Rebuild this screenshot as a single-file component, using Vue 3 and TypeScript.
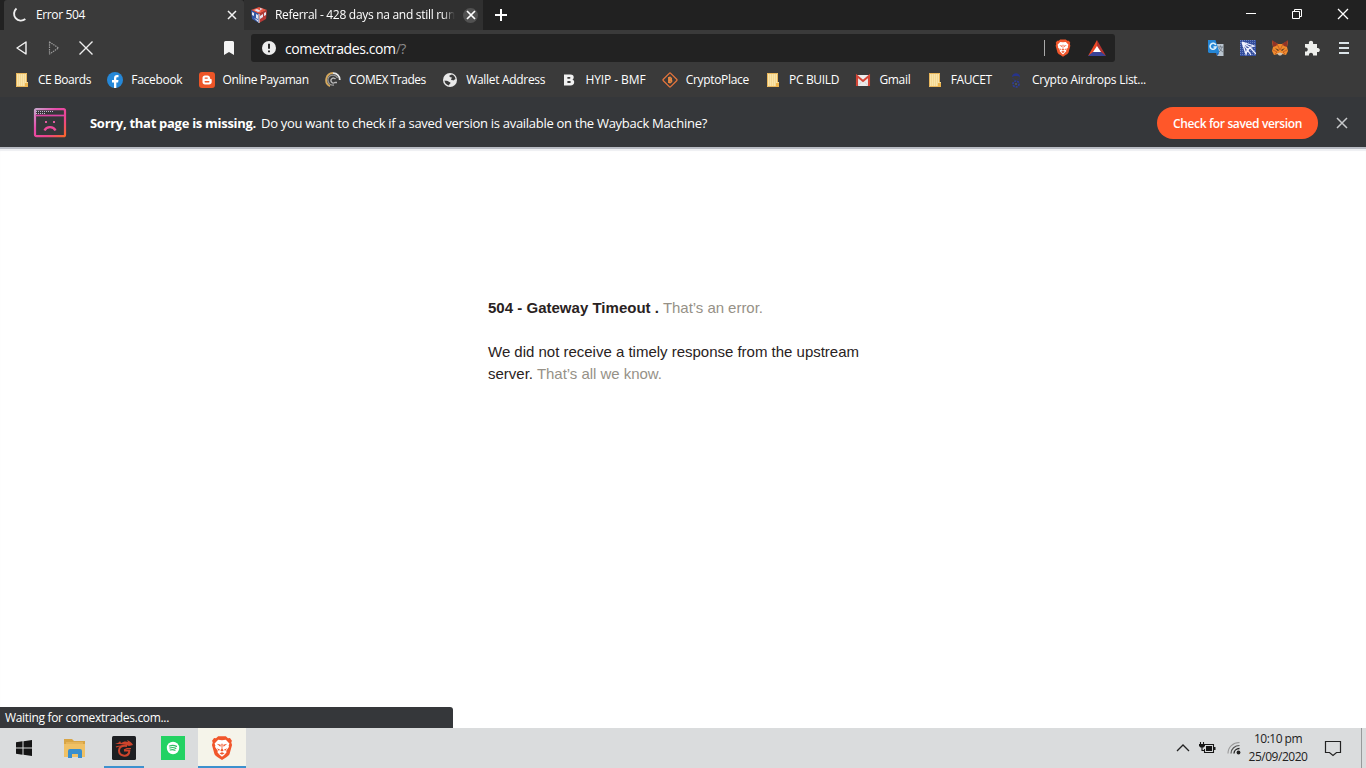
<script setup lang="ts">
interface Glyph {
  name: string;
  body: string;
}

interface Bookmark {
  label: string;
  width: number;
  icon: string;
}

const folder =
  '<path d="M2 1h11v9h1v5H2z" fill="#f4d892"/><path d="M3 3h9M3 5h9M3 7h9M3 9h9M3 11h9M3 13h8" stroke="#fff0c4" stroke-width="1" stroke-dasharray="1 1"/><path d="M2.500 1v13.500H12M2 1.500h10.500V10" fill="none" stroke="#e9b65b" stroke-width="1"/><path d="M11 11h3v4h-3z" fill="#edb44e"/>';

const bookmarks: Bookmark[] = [
  { label: 'CE Boards', width: 53, icon: folder },
  {
    label: 'Facebook',
    width: 51,
    icon: '<circle cx="8" cy="8" r="8" fill="#2588d8"/><path d="M7 16v-5.500H5V8h2V6.200C7 4 8.300 3 10 3h1.500v2.200h-1c-1 0-1.200.5-1.200 1.300V8h2.200l-.4 2.500H9.300V16z" fill="#fff"/>',
  },
  {
    label: 'Online Payaman',
    width: 86,
    icon: '<rect width="16" height="16" rx="3" fill="#ed5527"/><path d="M3.500 6c0-1.500 1-2.500 2.500-2.500h2.500c1.500 0 2.500 1 2.500 2.300 0 1 .3 1.200 1 1.200.5 0 .7.300.7.700V10c0 1.500-1 2.500-2.600 2.500H6c-1.500 0-2.500-1-2.500-2.500z" fill="#fff"/><path d="M6.200 6.100h2M6.200 9.700h3.600" stroke="#ed5527" stroke-width="1.400" stroke-linecap="round"/>',
  },
  {
    label: 'COMEX Trades',
    width: 77,
    icon: '<g fill="none"><path d="M5 14.200A7 7 0 0 1 8 1" stroke="#d5a85c" stroke-width="1.900"/><path d="M8 1.200a6.500 6.500 0 0 1 6.800 6.800" stroke="#e8e8e8" stroke-width="1.800"/><path d="M12.500 6A5 5 0 1 0 9 13" stroke="#999" stroke-width="1.300"/><path d="M10.500 7a2.500 2.500 0 1 0-.5 3.500h2" stroke="#b8b8b8" stroke-width="1.300"/></g>',
  },
  {
    label: 'Wallet Address',
    width: 79,
    icon: '<circle cx="8" cy="8" r="7" fill="#e9e9e9"/><path d="M2.500 8.500c1.500.5 3 0 4 1s2 .5 2 1.500-1.500 1-1.500 2.500C4.500 13 2.500 11 2.500 8.500zM7 4c1-1 2-1.500 3-1.500 2 .7 3.300 2.500 3.500 4.500-1 1-1.500.5-2 1.500-1-.5-2 0-2.500-1 0-1 1-1 1-2-1 .3-2-.5-3-1.500z" fill="#3b3b3b"/>',
  },
  {
    label: 'HYIP - BMF',
    width: 60,
    icon: '<path fill-rule="evenodd" d="M3 2.500h6.500c2.200 0 3.200 1 3.200 2.700 0 1.200-.5 1.900-1.500 2.300 1.300.3 2 1.200 2 2.600 0 2.200-1.300 3.400-3.700 3.400H3zM6.400 5v1.800h2.100c1.300 0 1.300-1.800 0-1.800zm0 3.900v2.100h2.300c1.500 0 1.500-2.100 0-2.100z" fill="#f1f1f1"/>',
  },
  {
    label: 'CryptoPlace',
    width: 63,
    icon: '<rect x="2.800" y="2.800" width="10.400" height="10.400" rx="1" transform="rotate(45 8 8)" fill="none" stroke="#e4743c" stroke-width="1.300"/><path d="M6.700 5.500v5h1.500c2.100 0 2.100-2.500.3-2.500 1.400 0 1.400-2.500-.3-2.500zM6.700 8h2M8 4.500v7" fill="none" stroke="#f08b42" stroke-width="1.200"/>',
  },
  { label: 'PC BUILD', width: 50, icon: folder },
  {
    label: 'Gmail',
    width: 31,
    icon: '<path d="M2 3h12v11H2z" fill="#ececec"/><path d="M2 14V4l6 5 6-5v10" fill="none" stroke="#d44536" stroke-width="2.100"/><path d="M3.500 13.500l3-4M12.500 13.500l-3-4" stroke="#d0c9c9" stroke-width=".7"/>',
  },
  { label: 'FAUCET', width: 41, icon: folder },
  {
    label: 'Crypto Airdrops List...',
    width: 114,
    icon: '<path d="M4 5c0-5 8-5 8 0-2-1.500-6-1.500-8 0z" fill="#27348b"/><path d="M4.500 6l3 3m4-3l-3 3" stroke="#27348b" stroke-dasharray="1 1"/><circle cx="8" cy="12" r="3" fill="none" stroke="#2c3c9b" stroke-width="1.700" stroke-dasharray="2 1"/><path d="M7.500 11.500h1v1h-1z" fill="#839fb0"/>',
  },
];

const lion =
  '<path d="M4.500 2L6.500.3h7L15.500 2l1.800-.2 1.800 2.500-.6 1.700.7 2.200-2.200 8c-.3 1.200-1.600 2.200-2.700 3L10 21.900 5.700 19.200c-1.200-.8-2.400-1.800-2.700-3L.8 8.200 1.500 6 .9 4.300l1.800-2.500z" fill="#f1562b"/><path d="M6.500 3.400L10 3.900l3.500-.5 3.300 3.500-.8 2.200.5.700-2.600 3.700.2 1.600-1.300 1.300-.8 1L10 19l-2-1.600-.8-1-1.300-1.300.2-1.600-2.600-3.700.5-.7-.8-2.200z" fill="#fff"/><path d="M5.200 7.100l3.700 1-.4 1.800zM14.800 7.100l-3.700 1 .4 1.800zM9.400 7h1.200l-.3 4.500 1.200 1.700-1.500 1-1.500-1 1.200-1.700zM5.300 11.300l3 1.200-1.300 1zM14.700 11.300l-3 1.200 1.300 1zM7.700 15.800l2.300-1 2.300 1L10 17.200z" fill="#f1562b"/>';

const extensions: Glyph[] = [
  {
    name: 'translate',
    body: '<path d="M7 4h8.500v12H9z" fill="#bac5cf"/><path d="M0 0h7.500L11 11v2H1l-1-1z" fill="#2586d5"/><path d="M7.800 5A3 3 0 1 0 8 7H5.500" fill="none" stroke="#d9effb" stroke-width="1.600"/><path d="M10 7h5m-2.500-1.500V7m1.500 0c-.5 2-1.500 4-3 5m.5-4c.7 2 2 3 3.500 4" fill="none" stroke="#707984" stroke-width=".9"/><path d="M8 13h3l-1.500 3z" fill="#1f66bc"/>',
  },
  {
    name: 'cursor',
    body: '<path d="M0 0h16v16H0z" fill="#334c9c"/><path d="M0 .5h16M0 2.500h16M0 4.500h16M0 6.500h16M0 8.500h16M0 10.500h16M0 12.500h16M0 14.500h16" stroke="#6880bd" stroke-dasharray="1 1"/><path d="M2 2l12 4-4 1.500 6 6.500M2 2l4 12 2-6M2 2l9 13M3 3l7 4.500L8 10" fill="none" stroke="#f0f1ff" stroke-width="1.300"/>',
  },
  {
    name: 'fox',
    body: '<path d="M0 1l6 3h4l6-3-1 6 1 4-2 4-4-1-2 1-2-1-4 1-2-4 1-4z" fill="#ef8b2d"/><path d="M0 0l6 4-2 2-3 1zM16 0l-6 4 2 2 3 1z" fill="#923427"/><path d="M3 8l4 2-1 1zm10 0L9 10l1 1z" fill="#463121"/><path d="M5 13.500l3-1 3 1-2 2H7z" fill="#d1c0ae"/><path d="M1 10l4 2-2 2m12-4-4 2 2 2M5 4l3 6 3-6" fill="none" stroke="#bd5422" stroke-width=".8"/>',
  },
  {
    name: 'puzzle',
    body: '<path d="M1 4h4c-1.300-4.500 5.300-4.500 4 0h4v4c3.800-.8 3.800 4.800 0 4v3.500H9c.8-3.700-4.800-3.700-4 0H1v-4c3.700.8 3.700-4.800 0-4z" fill="#eeefec"/>',
  },
];

const vFit = {
  mounted(el: HTMLElement, binding: { value: number }) {
    const natural = el.getBoundingClientRect().width;
    const count = (el.textContent ?? '').trim().length;
    el.style.letterSpacing = `${(binding.value - natural) / count}px`;
  },
};
</script>

<template>
  <div class="desktop">
    <header class="tabs">
      <div class="tab active">
        <svg class="spinner" width="16" height="16" viewBox="0 0 16 16">
          <path d="M4.500 1.500A6.600 6.600 0 1 0 13.300 12" fill="none" stroke="#eee" stroke-width="1.900" />
        </svg>
        <span class="tab-title"><span v-fit="49">Error 504</span></span>
        <svg class="tab-close" width="10" height="10" viewBox="0 0 10 10">
          <path d="M1 1l8 8m0-8L1 9" stroke="#f3f3f3" stroke-width="1.500" />
        </svg>
      </div>
      <div class="tab inactive">
        <svg class="cube" width="16" height="16" viewBox="0 0 16 16">
          <path d="M0 3l8-3 8 3-8 4z" fill="#e65442" />
          <path d="M0 3l8 4v9l-7-4z" fill="#3457a6" />
          <path d="M16 3l-8 4v9l7-4z" fill="#b53a37" />
          <path d="M3 3l3-1 4 2-3 1zm6-2l3 1-3 1zM1 5l2 1v3L1 8zm4 2l2 1v4l-2-1zm4 2l3-2v3l-3 2zm4-3l2-1v3l-2 1zM3 11l4 2v2z" fill="#e3e5f1" />
          <path d="M8 7v9" stroke="#eee" />
        </svg>
        <span class="tab-title fade"><span v-fit="180">Referral - 428 days na and still run</span></span>
        <span class="close-ring">
          <svg width="10" height="10" viewBox="0 0 10 10">
            <path d="M1 1l8 8m0-8L1 9" stroke="#fff" stroke-width="1.700" />
          </svg>
        </span>
      </div>
      <svg class="new-tab" width="12" height="12" viewBox="0 0 12 12">
        <path d="M6 0v12M0 6h12" stroke="#fff" stroke-width="2" />
      </svg>
      <div class="window-controls">
        <svg width="12" height="12" viewBox="0 0 12 12"><path d="M1 5.500h10" stroke="#fff" /></svg>
        <svg width="12" height="12" viewBox="0 0 12 12">
          <path d="M1.500 3.500h7v7h-7zM3.500 3.500v-2h7v7h-2" fill="none" stroke="#fff" />
        </svg>
        <svg width="12" height="12" viewBox="0 0 12 12">
          <path d="M1 1l10 10m0-10L1 11" stroke="#fff" stroke-width="1.300" />
        </svg>
      </div>
    </header>

    <nav class="toolbar">
      <div class="navigation">
        <svg width="16" height="16" viewBox="0 0 16 16">
          <path d="M12 2v12L3 8z" fill="none" stroke="#f3f3f3" stroke-width="1.400" stroke-linejoin="round" />
        </svg>
        <svg width="16" height="16" viewBox="0 0 16 16">
          <path d="M3.500 2v12l9-6z" fill="none" stroke="#999" stroke-width="1.200" stroke-dasharray="1.500 .8" stroke-linejoin="round" />
        </svg>
        <svg width="16" height="16" viewBox="0 0 16 16">
          <path d="M1.500 1.500l13 13m0-13l-13 13" stroke="#eee" stroke-width="1.400" />
        </svg>
      </div>
      <svg class="save" width="10" height="14" viewBox="0 0 10 14">
        <path d="M0 1.500Q0 0 1.500 0h7Q10 0 10 1.500V14l-5-3-5 3z" fill="#f4f4f4" />
      </svg>
      <div class="address">
        <svg class="info" width="14" height="14" viewBox="0 0 14 14">
          <circle cx="7" cy="7" r="7" fill="#ededed" />
          <path d="M7 2.800v5M7 9.400v1.900" stroke="#222" stroke-width="1.900" />
        </svg>
        <span v-fit="121" class="url">comextrades.com<span class="path">/?</span></span>
        <span class="divider"></span>
        <svg class="shield" width="16" height="18" viewBox="0 0 20 22" v-html="lion"></svg>
        <svg class="rewards" width="18" height="16" viewBox="0 0 18 16">
          <path d="M9 0L0 16l9-5z" fill="#ee4925" />
          <path d="M9 0l9 16-9-5z" fill="#b5332f" />
          <path d="M0 16h18l-5-4H5z" fill="#384397" />
          <path d="M9 6l-4 6h8z" fill="#fff" />
        </svg>
      </div>
      <div class="extensions">
        <svg v-for="item in extensions" :key="item.name" width="16" height="16" viewBox="0 0 16 16" v-html="item.body"></svg>
        <svg width="16" height="16" viewBox="0 0 16 16">
          <path d="M3 3h10M3 8h10M3 13h10" stroke="#dbe4e8" stroke-width="1.900" />
        </svg>
      </div>
    </nav>

    <nav class="bookmarks">
      <a v-for="item in bookmarks" :key="item.label" class="bookmark">
        <svg width="16" height="16" viewBox="0 0 16 16" v-html="item.icon"></svg>
        <span v-fit="item.width">{{ item.label }}</span>
      </a>
    </nav>

    <section class="banner">
      <svg class="missing" width="34" height="30" viewBox="0 0 34 30">
        <defs>
          <linearGradient id="missing-page" x1="0" y1="0" x2="1" y2="1">
            <stop offset="0" stop-color="#c8a3ca" />
            <stop offset=".35" stop-color="#e64bab" />
            <stop offset=".7" stop-color="#ed4589" />
            <stop offset="1" stop-color="#f86629" />
          </linearGradient>
        </defs>
        <rect x="2" y="1.200" width="30" height="27" rx="1.500" fill="none" stroke="url(#missing-page)" stroke-width="2.200" />
        <path d="M2.500 7.500h29" stroke="#dc45a4" stroke-width="1.700" />
        <path d="M3 3.500h18M3 5.500h9" stroke="#c2b9d2" stroke-width="1" stroke-dasharray="1 1" />
        <path d="M12 13h2v2h-2zm8 0h2v2h-2z" fill="#df5b9e" />
        <path d="M11.500 22.500c2-4.500 9-4.500 11 0" fill="none" stroke="#ec4a9a" stroke-width="2.300" />
      </svg>
      <strong v-fit="166" class="missing-title">Sorry, that page is missing.</strong>
      <span v-fit="446">Do you want to check if a saved version is available on the Wayback Machine?</span>
      <button class="check"><span v-fit="129">Check for saved version</span></button>
      <svg class="dismiss" width="12" height="12" viewBox="0 0 12 12">
        <path d="M1 1l10 10m0-10L1 11" stroke="#c7c9cb" stroke-width="1.500" />
      </svg>
    </section>

    <main class="page">
      <div class="message">
        <p><strong v-fit="171">504 - Gateway Timeout .</strong> <span v-fit="100" class="muted">That’s an error.</span></p>
        <p>
          <span v-fit="371">We did not receive a timely response from the upstream</span><br />
          <span v-fit="45">server.</span> <span v-fit="125" class="muted">That’s all we know.</span>
        </p>
      </div>
      <div class="status"><span v-fit="164">Waiting for comextrades.com...</span></div>
    </main>

    <footer class="taskbar">
      <div class="task start">
        <svg width="16" height="16" viewBox="0 0 16 16">
          <path d="M0 2.300l6.500-1v6.200H0zm7.500-1.100L16 0v7.500H7.500zM0 8.500h6.500v6.200L0 13.700zm7.500 0H16V16l-8.500-1.200z" fill="#151515" />
        </svg>
      </div>
      <div class="task">
        <svg width="22" height="19" viewBox="0 0 22 19">
          <path d="M0 0h8l2 2h11v16H0z" fill="#d9a544" />
          <path d="M2 3h17v2H2z" fill="#e5b55a" />
          <path d="M0 5h21v13H0z" fill="#f0c165" />
          <path d="M4 19v-7q0-2 2-2h10q2 0 2 2v7h-4v-4H8v4z" fill="#398fce" />
        </svg>
      </div>
      <div class="task running">
        <svg width="24" height="24" viewBox="0 0 24 24">
          <rect width="24" height="24" rx="1.500" fill="#1d1f22" />
          <path d="M3 8c2-1 4-1 5-3l1 2c2-1.500 5-2 7-1l-1-2c3 1 5 3 6 5l-4 1c-5-2-11-2-14-2z" fill="#ce442c" />
          <g fill="none" stroke="#ce442c">
            <path d="M15 10c-5-1-8 1-8 4.500C7 20 15 21.500 17 17l.3-2.500H12" stroke-width="2" />
            <path d="M4 11c2-1 4-1 6-1M12 14l3-1.500h4" stroke-width="1.200" />
          </g>
        </svg>
      </div>
      <div class="task music">
        <svg width="24" height="24" viewBox="0 0 24 24">
          <path d="M0 0h24v24H0z" fill="#23d263" />
          <circle cx="12" cy="12" r="6.200" fill="#fff" />
          <path d="M8.500 10c2.500-1 5-.7 7 .4M8.800 12c2-.8 4.300-.5 6 .4M9.200 14c1.700-.6 3.500-.4 4.800.3" fill="none" stroke="#30bd63" stroke-width="1.200" stroke-linecap="round" />
        </svg>
      </div>
      <div class="task running current">
        <svg width="22" height="24" viewBox="0 0 20 22" v-html="lion"></svg>
      </div>
      <div class="tray">
        <svg class="chevron" width="14" height="8" viewBox="0 0 14 8">
          <path d="M1 7l6-6 6 6" fill="none" stroke="#222" stroke-width="1.300" />
        </svg>
        <svg class="battery" width="17" height="12" viewBox="0 0 17 12">
          <path d="M1.500 0v2.500M4.500 0v2.500M3 5v3.500h2M6 2.500h8.500v8H5.500V7" fill="none" stroke="#171717" stroke-width="1.100" />
          <path d="M0 2h6v2L4.500 5.500h-3L0 4zM7 4h6v5H7zm8 1h1.500v3H15z" fill="#171717" />
        </svg>
        <svg class="wifi" width="14" height="14" viewBox="0 0 14 14">
          <g fill="none">
            <path d="M1 12.500C1 6 6 1.500 12.500 1.500" stroke="#999" stroke-width="1.100" />
            <path d="M4 12.500c0-4.500 4-8 8.500-8" stroke="#555" stroke-width="1.200" />
            <path d="M7 12.500c0-3 2.500-5 5.500-5" stroke="#222" stroke-width="1.300" />
          </g>
          <circle cx="11.500" cy="11.500" r="1.900" fill="#222" />
        </svg>
        <div class="clock">
          <span v-fit="48">10:10 pm</span>
          <span v-fit="59">25/09/2020</span>
        </div>
        <svg class="notice" width="18" height="17" viewBox="0 0 18 17">
          <path d="M1.500 1.500h15v11h-4l-3.500 3-3.500-3h-4z" fill="none" stroke="#222" stroke-width="1.200" />
        </svg>
        <span class="show-desktop"></span>
      </div>
    </footer>
  </div>
</template>

<style>
body {
  margin: 0;
  overflow: hidden;
}
</style>

<style scoped>
.desktop {
  width: 1366px;
  height: 768px;
  display: flex;
  flex-direction: column;
  background: #fff;
  font-family: "Open Sans", "Noto Sans", sans-serif;
  font-size: 12px;
  color: #fff;
}

.desktop * {
  box-sizing: border-box;
}

svg {
  display: block;
  flex-shrink: 0;
}

.tabs {
  height: 30px;
  padding-left: 4px;
  display: flex;
  align-items: center;
  background: #212121;
}

.tab {
  height: 30px;
  display: flex;
  align-items: center;
  flex-shrink: 0;
}

.active {
  width: 240px;
  padding: 0 7px 0 8px;
  background: #3a3a3a;
  border-radius: 3px 3px 0 0;
}

.inactive {
  width: 239px;
  padding: 0 5px 0 7px;
  background: #303030;
}

.tab-title {
  flex: 1;
  margin-left: 8px;
  padding-bottom: 1px;
  white-space: nowrap;
}

.fade {
  mask-image: linear-gradient(to right, #000 93%, transparent);
}

.close-ring {
  width: 15px;
  height: 15px;
  margin-left: 8px;
  display: flex;
  align-items: center;
  justify-content: center;
  border-radius: 50%;
  background: #515151;
}

.new-tab {
  margin-left: 12px;
}

.window-controls {
  margin-left: auto;
  margin-right: 17px;
  padding-bottom: 2px;
  display: flex;
  gap: 34px;
}

.toolbar {
  height: 34px;
  display: flex;
  align-items: center;
  background: #3a3a3a;
  padding: 2px 14px 0;
}

.navigation {
  display: flex;
  gap: 16px;
}

.save {
  margin-left: 130px;
}

.address {
  width: 864px;
  height: 28px;
  margin-left: 17px;
  padding: 0 9px 0 11px;
  display: flex;
  align-items: center;
  background: #222;
  border-radius: 3px;
}

.url {
  margin-left: 9px;
  font-size: 14px;
}

.path {
  color: #8c8c8c;
}

.divider {
  width: 1px;
  height: 16px;
  margin-left: auto;
  background: #aaa;
}

.shield {
  margin-left: 10px;
}

.rewards {
  margin-left: 17px;
}

.extensions {
  display: flex;
  gap: 16px;
  margin-left: auto;
}

.bookmarks {
  height: 33px;
  display: flex;
  align-items: center;
  gap: 16.3px;
  padding: 0 0 2px 14px;
  background: #3a3a3a;
}

.bookmark {
  display: flex;
  align-items: center;
  gap: 8px;
  white-space: nowrap;
}

.banner {
  height: 50px;
  display: flex;
  align-items: center;
  padding: 2px 18px 0 33px;
  background: #35373a;
  font-size: 13px;
  white-space: nowrap;
}

.missing-title {
  margin: 0 5px 0 23px;
}

.check {
  width: 161px;
  height: 32px;
  margin: 0 18px 0 auto;
  padding: 0;
  border: 0;
  border-radius: 16px;
  background: #ff5729;
  color: #fff;
  font: 600 12px "Open Sans", sans-serif;
}

.page {
  flex: 1;
  display: flex;
  flex-direction: column;
  justify-content: space-between;
  border-top: 2px solid #b9bcc4;
  box-shadow: inset 0 2px 1px #eeeff2;
}

.message {
  width: 390px;
  margin: 148px 0 0 488px;
  font: 15px/22px "Liberation Sans", Arial, sans-serif;
  color: #292222;
  white-space: nowrap;
}

.message p {
  margin: 0 0 22px;
}

.muted {
  color: #969187;
}

.status {
  width: 453px;
  height: 21px;
  padding-left: 5px;
  display: flex;
  align-items: center;
  background: #35373a;
  border-radius: 0 3px 0 0;
}

.taskbar {
  height: 40px;
  display: flex;
  background: #dadcdd;
  color: #222;
}

.task {
  width: 49px;
  display: flex;
  align-items: center;
  justify-content: center;
}

.task.start {
  width: 50px;
  padding-right: 2px;
}

.task.music {
  padding-right: 2px;
}

.running {
  width: 50px;
  box-shadow: inset 0 -2px #3d91ce;
}

.running:not(.current) {
  width: 40px;
  margin: 0 5px;
}

.current {
  width: 48px;
  background: #f5f4ea;
}

.tray {
  margin-left: auto;
  display: flex;
  align-items: center;
}

.battery {
  margin-left: 9px;
}

.wifi {
  margin-left: 11px;
}

.clock {
  width: 60px;
  margin-left: 7px;
  display: flex;
  flex-direction: column;
  align-items: center;
  line-height: 18px;
}

.notice {
  margin-left: 16px;
}

.show-desktop {
  width: 5px;
  height: 40px;
  margin-left: 19px;
  border-left: 1px solid #989a9b;
}
</style>
